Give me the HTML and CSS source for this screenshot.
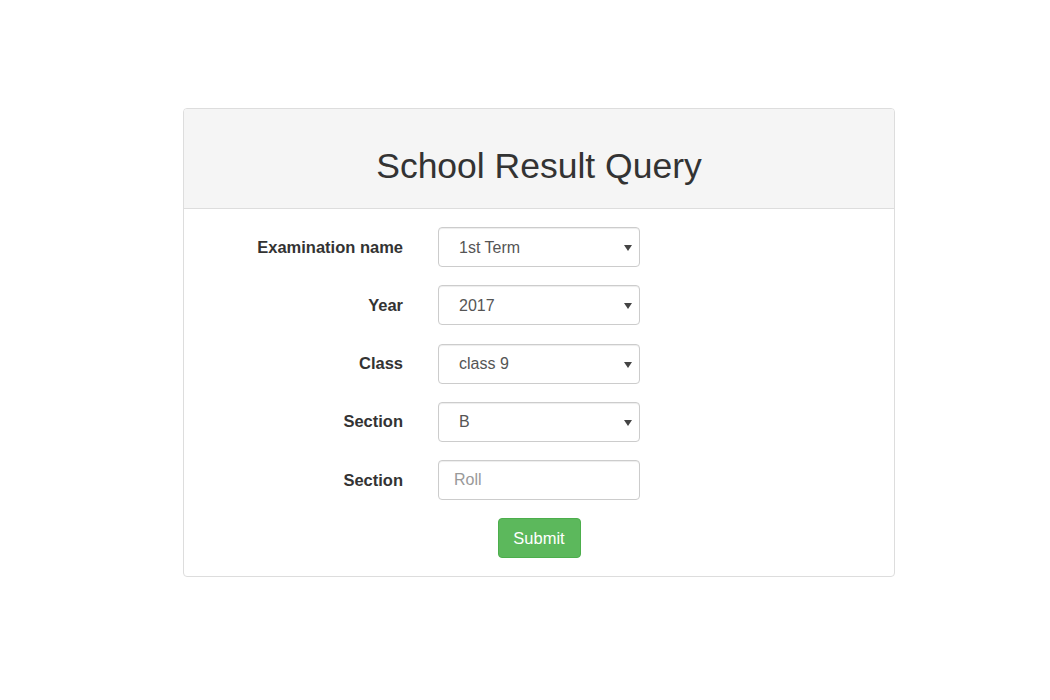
FILE: index.html
```html
<!DOCTYPE html>
<html>
<head>
<meta charset="utf-8">
<link rel="stylesheet" href="styles.css">
</head>
<body>
<div class="page">
  <div class="panel">
    <div class="panel-head"><h1>School Result Query</h1></div>
    <form class="panel-body">
      <label class="lbl">Examination name</label>
      <div class="sel"><select><option>1st Term</option></select></div>
      <label class="lbl">Year</label>
      <div class="sel"><select><option>2017</option></select></div>
      <label class="lbl">Class</label>
      <div class="sel"><select><option>class 9</option></select></div>
      <label class="lbl">Section</label>
      <div class="sel"><select><option>B</option></select></div>
      <label class="lbl">Section</label>
      <input class="field" type="text" placeholder="Roll">
      <div></div>
      <div class="btn-wrap"><button type="button" class="btn">Submit</button></div>
    </form>
  </div>
</div>
</body>
</html>
```
FILE: styles.css
```css
html, body { margin: 0; padding: 0; background: #fff; }
body { font-family: "Liberation Sans", Arial, sans-serif; color: #333; }
.page { padding-top: 108px; padding-left: 183px; }
.panel {
  width: 710px;
  border: 1px solid #ddd;
  border-radius: 4px;
  overflow: hidden;
}
.panel-head {
  background: #f5f5f5;
  border-bottom: 1px solid #ddd;
  height: 99px;
  display: flex;
  align-items: center;
  justify-content: center;
}
.panel-head h1 {
  margin: 0;
  font-size: 35.5px;
  font-weight: normal;
  color: #333;
  position: relative;
  top: 8px;
}
.panel-body {
  display: grid;
  grid-template-columns: 219px 202px;
  column-gap: 35px;
  row-gap: 18.25px;
  padding: 18px 0 18px 0;
  margin: 0;
}
.lbl {
  font-weight: bold;
  font-size: 16.5px;
  text-align: right;
  align-self: center;
  color: #333;
}
.sel { position: relative; height: 40px; }
.sel select, .field {
  box-sizing: border-box;
  width: 202px;
  height: 40px;
  border: 1px solid #ccc;
  border-radius: 4px;
  background: #fff;
  font-family: "Liberation Sans", Arial, sans-serif;
  font-size: 16px;
  color: #555;
  padding: 0 20px;
  -webkit-appearance: none;
  appearance: none;
  box-shadow: inset 0 1px 1px rgba(0,0,0,.075);
  outline: none;
}
.field { padding: 0 15px; }
.field::placeholder { color: #999; }
.sel::after {
  content: "";
  position: absolute;
  right: 8px;
  top: 18px;
  border-left: 4px solid transparent;
  border-right: 4px solid transparent;
  border-top: 6px solid #444;
  pointer-events: none;
}
.btn-wrap { display: flex; justify-content: center; }
.btn {
  height: 40px;
  width: 83px;
  background: #5cb85c;
  border: 1px solid #4cae4c;
  border-radius: 4px;
  color: #fff;
  font-family: "Liberation Sans", Arial, sans-serif;
  font-size: 16.5px;
  padding: 0;
}
```
